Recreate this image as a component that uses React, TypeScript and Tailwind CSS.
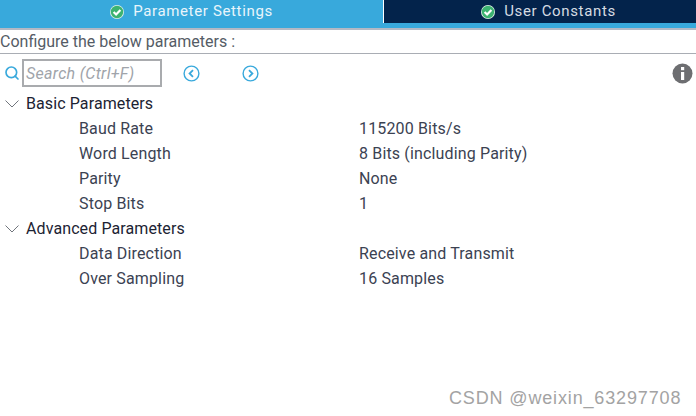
import React from 'react';
import { Search } from 'lucide-react';

const CheckBadge = () => (
  <svg width="14" height="14" viewBox="0 0 14 14">
    <circle cx="7" cy="7" r="7" fill="#dff0e6" />
    <circle cx="7" cy="7" r="6.2" fill="#3cb371" />
    <path d="M3.6 7 L6.1 9.5 L10.4 5" fill="none" stroke="#fff" strokeWidth="2.2" />
  </svg>
);

const NavArrow = ({ left }: { left?: boolean }) => (
  <svg width="17" height="17" viewBox="0 0 17 17" fill="none" stroke="#39a9dc">
    <circle cx="8.5" cy="8.5" r="7.4" strokeWidth="1.4" />
    <path d={left ? 'M10 5.2 L6.6 8.5 L10 11.8' : 'M7 5.2 L10.4 8.5 L7 11.8'} strokeWidth="1.8" />
  </svg>
);

const Chevron = () => (
  <svg width="14" height="8" viewBox="0 0 14 8" fill="none" stroke="#70757c" strokeWidth="1" className="ml-[5px]">
    <path d="M0.5 0.5 L7 7 L13.5 0.5" />
  </svg>
);

const Group = ({ title, rows }: { title: string; rows: string[][] }) => (
  <div>
    <div className="h-[25px] flex items-center text-[#1c2333] tracking-[0.1px]">
      <Chevron />
      <span className="ml-[7px]">{title}</span>
    </div>
    {rows.map(([name, value]) => (
      <div key={name} className="h-[25px] flex items-center text-[#3b4252] tracking-[0.15px]">
        <span className="pl-[79px] w-[359px]">{name}</span>
        <span>{value}</span>
      </div>
    ))}
  </div>
);

export default function App() {
  return (
    <div className="relative w-[696px] h-[416px] overflow-hidden bg-white font-['Roboto',sans-serif] text-[16px]">
      {/* Tabs */}
      <div className="h-[28px] bg-[#38a9dc] flex">
        <div className="w-[383px] h-[23px] flex items-center justify-center gap-[9px] text-[15px] text-[#e9f5fb] tracking-[0.65px]">
          <CheckBadge />
          <span>Parameter Settings</span>
        </div>
        <div className="flex-1 h-[23px] bg-[#03234b] border-l border-white flex items-center justify-center gap-[9px] pl-[17px] text-[15px] text-[#d5dbe2] tracking-[0.65px]">
          <CheckBadge />
          <span>User Constants</span>
        </div>
      </div>
      <div className="h-[2px] bg-[#b4b9c4]" />

      <div className="h-[24px] flex items-center text-[#555c66] border-b border-[#a9adb4]">
        Configure the below parameters :
      </div>

      {/* Toolbar */}
      <div className="h-[38px] flex items-center">
        <Search size={16} strokeWidth={2.5} className="ml-[4px] text-[#39a9dc]" />
        <div className="ml-[2px] w-[140px] h-[28px] border-2 border-[#a9abae] flex items-center pl-[2px] pt-[1px] italic text-[#a0a4aa] tracking-[0.3px]">
          Search (Ctrl+F)
        </div>
        <div className="ml-[21px]"><NavArrow left /></div>
        <div className="ml-[42px]"><NavArrow /></div>
        <svg className="ml-auto mr-[3px]" width="21" height="21" viewBox="0 0 21 21">
          <circle cx="10.5" cy="10.5" r="10" fill="#6d6e71" />
          <rect x="9" y="9" width="3.2" height="8" fill="#fff" />
          <rect x="9" y="4" width="3.2" height="3.2" fill="#fff" />
        </svg>
      </div>

      {/* Parameter tree */}
      <div className="-mt-[1px]">
        <Group
          title="Basic Parameters"
          rows={[
            ['Baud Rate', '115200 Bits/s'],
            ['Word Length', '8 Bits (including Parity)'],
            ['Parity', 'None'],
            ['Stop Bits', '1'],
          ]}
        />
        <Group
          title="Advanced Parameters"
          rows={[
            ['Data Direction', 'Receive and Transmit'],
            ['Over Sampling', '16 Samples'],
          ]}
        />
      </div>

      {/* Watermark */}
      <div className="absolute left-[449px] top-[385px] text-[#a3a3a3] text-[18px] tracking-[0.85px] font-['Liberation_Sans',sans-serif]">
        CSDN @weixin_63297708
      </div>
    </div>
  );
}
